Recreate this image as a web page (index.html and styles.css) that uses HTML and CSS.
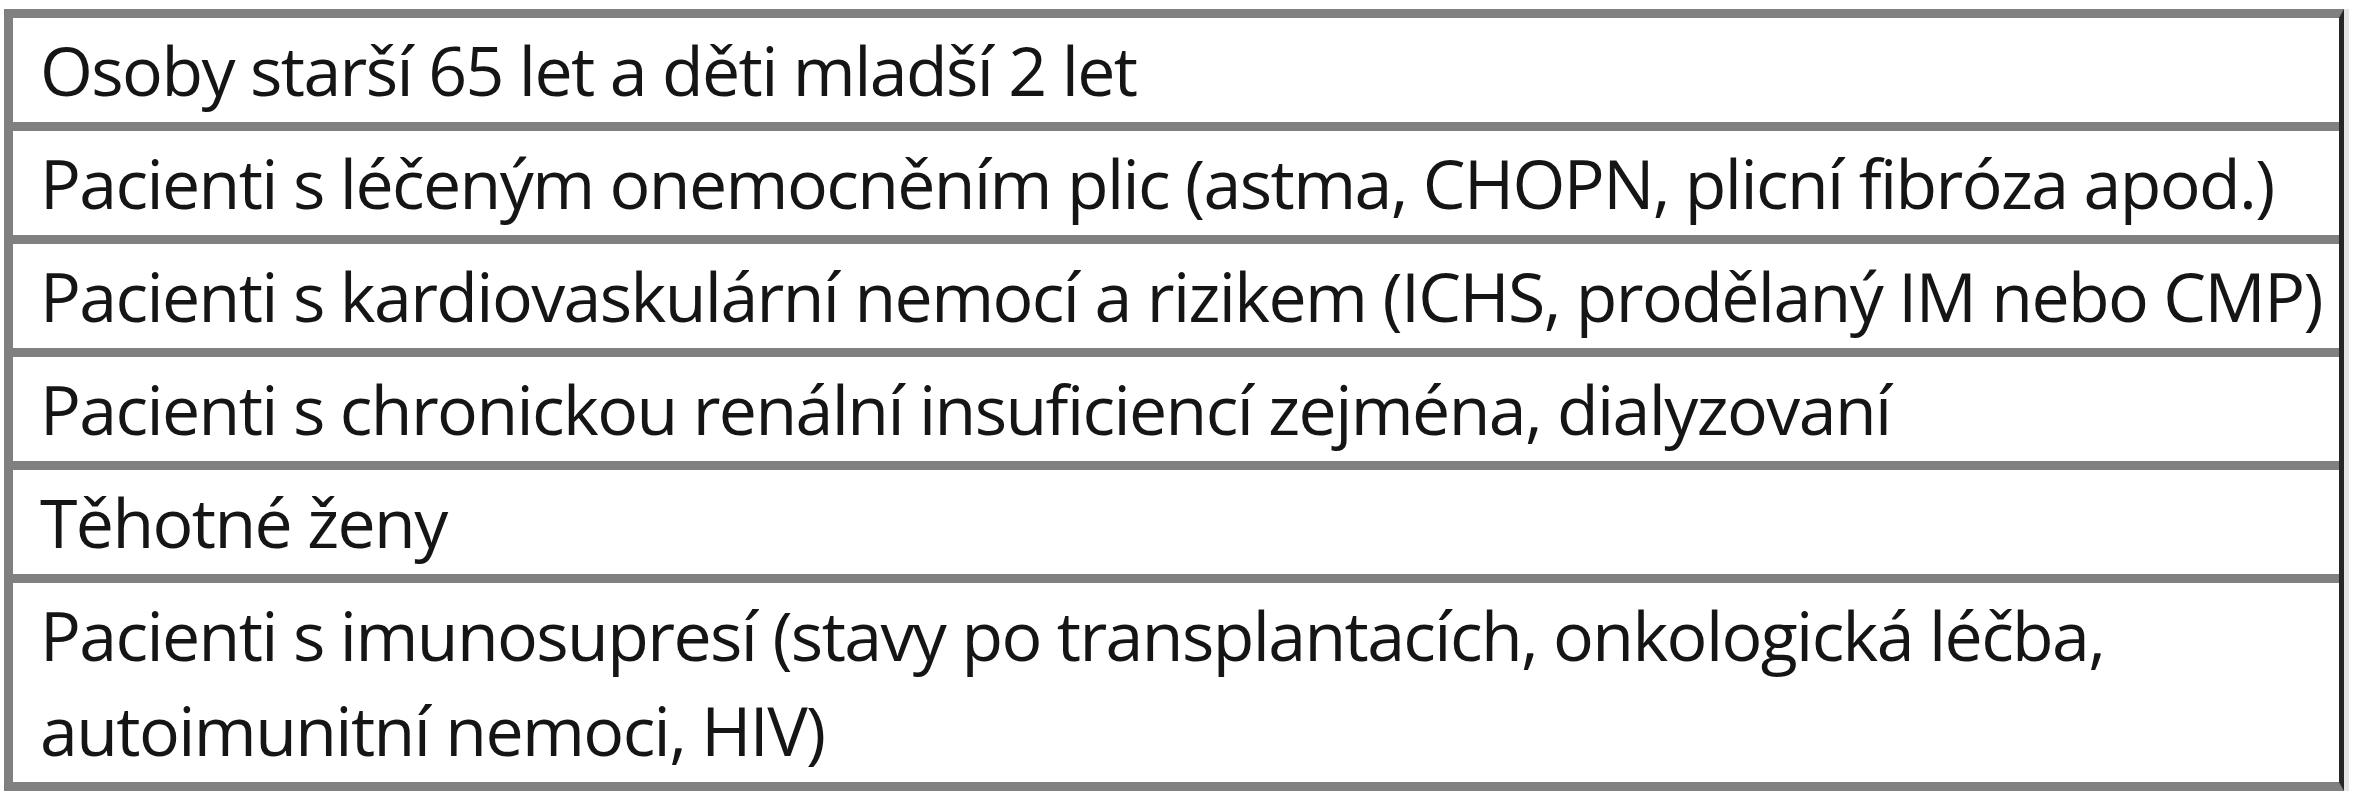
FILE: index.html
```html
<!DOCTYPE html>
<html lang="cs">
<head>
<meta charset="utf-8">
<title>Rizikové skupiny</title>
<link rel="stylesheet" href="styles.css">
</head>
<body>
<div class="risk-table">
  <div class="risk-row">Osoby starší 65 let a děti mladší 2 let</div>
  <div class="risk-row">Pacienti s léčeným onemocněním plic (astma, CHOPN, plicní fibróza apod.)</div>
  <div class="risk-row">Pacienti s kardiovaskulární nemocí a rizikem (ICHS, prodělaný IM nebo CMP)</div>
  <div class="risk-row">Pacienti s chronickou renální insuficiencí zejména, dialyzovaní</div>
  <div class="risk-row">Těhotné ženy</div>
  <div class="risk-row">Pacienti s imunosupresí (stavy po transplantacích, onkologická léčba,<br>autoimunitní nemoci, HIV)</div>
</div>
</body>
</html>
```

FILE: styles.css
```css
html, body {
  margin: 0;
  padding: 0;
  background: #ffffff;
}

body {
  padding: 9px 0 0 4px;
}

.risk-table {
  width: 2340px;
  box-sizing: border-box;
  border: 9px solid #808080;
  border-right: 5px solid #262626;
  box-shadow: 5px 0 0 #e4e4e4;
  display: flex;
  flex-direction: column;
  font-family: "Open Sans", "Noto Sans", sans-serif;
  font-size: 68px;
  letter-spacing: -1.6px;
  color: #151515;
}

.risk-row {
  line-height: 95px;
  padding: 4px 20px 5px 27px;
  white-space: nowrap;
}

.risk-row + .risk-row {
  border-top: 9px solid #808080;
}
```
